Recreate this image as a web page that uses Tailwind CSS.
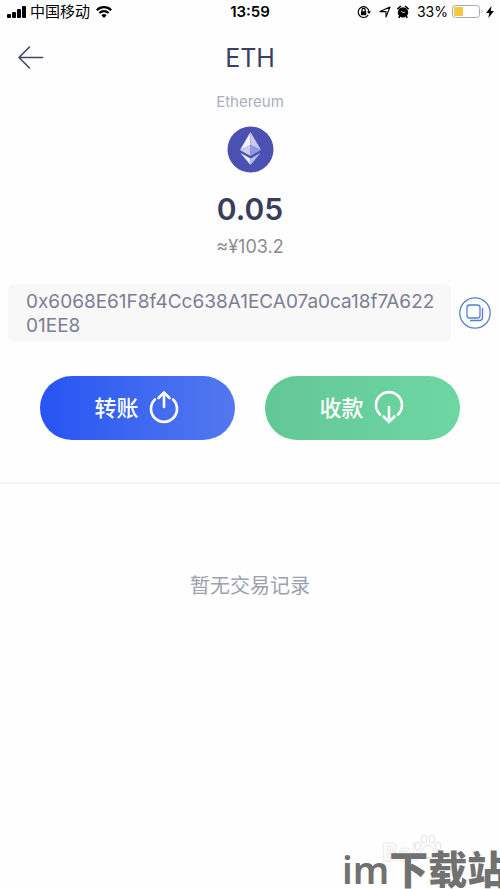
<!DOCTYPE html>
<html lang="zh-CN">
<head>
<meta charset="utf-8">
<meta name="viewport" content="width=device-width, initial-scale=1">
<title>ETH</title>
<script src="https://cdn.jsdelivr.net/npm/@tailwindcss/browser@4"></script>
</head>
<body class="relative min-h-screen overflow-x-hidden bg-[#fefefe] font-['Inter','Noto_Sans_CJK_SC',sans-serif]">
  <div class="grid h-6 grid-cols-[1fr_auto_1fr] items-center pr-1.5 pl-1.5 text-sm text-black">
    <div class="flex items-center gap-1">
      <svg class="h-3 w-5" viewBox="0 0 20 12" aria-hidden="true"><rect x="1" y="8" width="4" height="4" rx="1"/><rect x="6" y="6" width="4" height="6" rx="1"/><rect x="11" y="3" width="4" height="9" rx="1"/><rect x="16" y="0" width="4" height="12" rx="1"/></svg>
      <span class="text-[15px] leading-5">中国移动</span>
      <svg class="ml-0.5 h-3 w-4" viewBox="0 0 16 12" fill="none" stroke="#000" stroke-width="2.2" aria-hidden="true"><path d="M.8 4.2a10.2 10.2 0 0 1 14.4 0M3.4 7a6.5 6.5 0 0 1 9.2 0"/><path d="M8 12 5.4 9.2a3.8 3.8 0 0 1 5.2 0z" fill="#000" stroke="none"/></svg>
    </div>
    <time class="text-[15px] leading-5 font-semibold">13:59</time>
    <div class="flex items-center justify-end">
      <svg class="mr-2 h-3.5 w-3.5 shrink-0" viewBox="0 0 14 14" fill="none" stroke="#000" stroke-width="1.2" aria-hidden="true"><path d="M11.2 10A5.4 5.4 0 1 1 12 6.5"/><path d="M10 6.2h4l-2 2.8z" fill="#000" stroke="none"/><rect x="4" y="6.2" width="5.2" height="4" fill="#000" stroke="none"/><path d="M5 6.4V5a1.6 1.6 0 0 1 3.2 0v1.4"/></svg>
      <svg class="mr-1.5 h-3 w-3 shrink-0" viewBox="0 0 12 12" fill="none" stroke="#000" stroke-width="1.1" stroke-linejoin="round" aria-hidden="true"><path d="M11 1 7 11V5.6H1z"/></svg>
      <svg class="mr-2 h-3.5 w-3 shrink-0" viewBox="0 0 12 14" aria-hidden="true"><circle cx="6" cy="7.4" r="5.200"/><path d="M.4 4.2 3.8 1M11.6 4.2 8.2 1M2.8 11l-1 1.8M9.2 11l1 1.8" stroke="#000" stroke-width="1.6"/><path d="M4 6 6 7.6 8.200 7" fill="none" stroke="#fff" stroke-width=".8"/></svg>
      <span class="mr-1">33%</span>
      <svg class="mr-0.5 h-3.5 w-8 shrink-0" viewBox="0 0 32 14" aria-hidden="true"><rect x=".5" y=".5" width="27" height="12" rx="3" fill="#fff" stroke="#a9a9a9"/><rect x="2" y="2" width="9" height="9" rx="1" fill="#f6c745"/><path d="M29.5 4.5q2 2 0 4z" fill="#aaa"/></svg>
      <svg class="h-3 w-2 shrink-0" viewBox="0 0 8 12" aria-hidden="true"><path d="M5.5 0 0 7h3.3L2.3 12 8 5H4.7z"/></svg>
    </div>
  </div>

  <header class="grid grid-cols-[1fr_auto_1fr] items-center px-4 pt-4">
    <button type="button" aria-label="返回" class="flex h-9 w-9 items-center">
      <svg class="h-6 w-7" viewBox="0 0 28 24" fill="none" stroke="#42465f" stroke-width="1.6" stroke-linecap="round" stroke-linejoin="round" aria-hidden="true"><path d="M26.500 11.500H3M13.500 1 3 11.500 13.500 22"/></svg>
    </button>
    <h1 class="text-[25px] leading-9 text-[#3a3e64]">ETH</h1>
  </header>

  <main>
    <section class="flex flex-col items-center pt-4">
      <p class="text-[15px] leading-5 text-[#a9afbf]">Ethereum</p>
      <svg class="mt-3.5 h-[47px] w-[47px]" viewBox="0 0 47 47" aria-label="Ethereum" role="img">
        <circle cx="23.500" cy="23.500" r="23" fill="#4a51b2"/>
        <path d="M23.500 6 13 24l10.500-5z" fill="#f2f3ff"/><path d="M23.500 6 34 24l-10.500-5z" fill="#c7caf5"/>
        <path d="M13 24l10.500-5v11z" fill="#c9ccf6"/><path d="M34 24l-10.500-5v11z" fill="#9499df"/>
        <path d="M13.500 27 23.500 32.500V39z" fill="#eff0ff"/><path d="M33.500 27 23.500 32.500V39z" fill="#b9bdef"/>
      </svg>
      <p class="mt-4 text-[30px] leading-10 font-semibold text-[#383d59]">0.05</p>
      <p class="mt-1.5 text-lg leading-6 text-[#8b8b91]">≈¥103.2</p>
    </section>

    <section class="mt-[25px] flex items-center gap-2 px-2">
      <p class="min-w-0 flex-1 rounded-md bg-[#f8f8f9] pt-1.5 pr-3 pb-1 pl-[18px] text-[19px] leading-6 break-all text-[#7c7e92]">0x6068E61F8f4Cc638A1ECA07a0ca18f7A62201EE8</p>
      <button type="button" aria-label="复制地址" class="mr-px shrink-0">
        <svg class="h-8 w-8" viewBox="0 0 32 32" fill="none" stroke="#5580cf" stroke-width="1.3" aria-hidden="true"><circle cx="16" cy="16" r="15.200"/><rect x="8" y="8" width="13" height="13" rx="2.500"/><path d="M23.500 11v9.500a3 3 0 0 1-3 3H11"/></svg>
      </button>
    </section>

    <section class="mt-[34px] grid grid-cols-2 gap-[30px] px-10">
      <button type="button" class="flex h-16 items-center justify-center gap-2.5 rounded-full bg-linear-to-r from-[#2754f3] to-[#5378ee] text-[22px] font-medium text-white">
        <span>转账</span>
        <svg class="h-8 w-8 overflow-visible" viewBox="0 0 32 32" fill="none" stroke="#fff" stroke-width="2.600" stroke-linecap="round" aria-hidden="true"><path d="M6 7.500a13 13 0 1 0 18 0M15 15V1M9.500 6 15 .500 20.500 6"/></svg>
      </button>
      <button type="button" class="flex h-16 items-center justify-center gap-2.5 rounded-full bg-linear-to-r from-[#63c795] to-[#6dd7a3] text-[22px] font-medium text-white">
        <span>收款</span>
        <svg class="h-8 w-8 overflow-visible" viewBox="0 0 32 32" fill="none" stroke="#fff" stroke-width="2.600" stroke-linecap="round" aria-hidden="true"><path d="M6 22.500a13 13 0 1 1 18 0M15 15v14M9.500 24.500l5.500 5.500 5.500-5.500"/></svg>
      </button>
    </section>

    <section class="mt-[42px] border-t-2 border-[#f4f4f5] pt-[88px] pb-64 text-center">
      <p class="text-xl leading-7 text-[#9da1ae]">暂无交易记录</p>
    </section>
  </main>

  <div class="absolute right-0 bottom-0 h-14 w-[158px] overflow-hidden">
    <div class="absolute top-1 left-10 text-2xl leading-8 font-bold text-[#fefefe] [-webkit-text-stroke:1px_#ebebeb]" aria-hidden="true">Bai</div>
    <svg class="absolute top-0 left-[72px] h-7 w-7" viewBox="0 0 28 28" fill="#fefefe" stroke="#e2e2e2" aria-hidden="true"><ellipse cx="10" cy="6" rx="3" ry="4"/><ellipse cx="18" cy="6" rx="3" ry="4"/><ellipse cx="4" cy="13" rx="3" ry="4"/><ellipse cx="24" cy="13" rx="3" ry="4"/><path d="M14 12c-4 0-4 4-7 6s-2 8 3 7q4-1 8 0c5 1 6-5 3-7s-3-6-7-6z"/></svg>
    <p class="absolute top-2 left-0 text-[39px] leading-[56px] font-black whitespace-nowrap text-[#717171] font-['Noto_Sans','Noto_Sans_CJK_SC',sans-serif]"><span class="text-[38px] font-semibold">im</span>下载站</p>
  </div>
</body>
</html>
